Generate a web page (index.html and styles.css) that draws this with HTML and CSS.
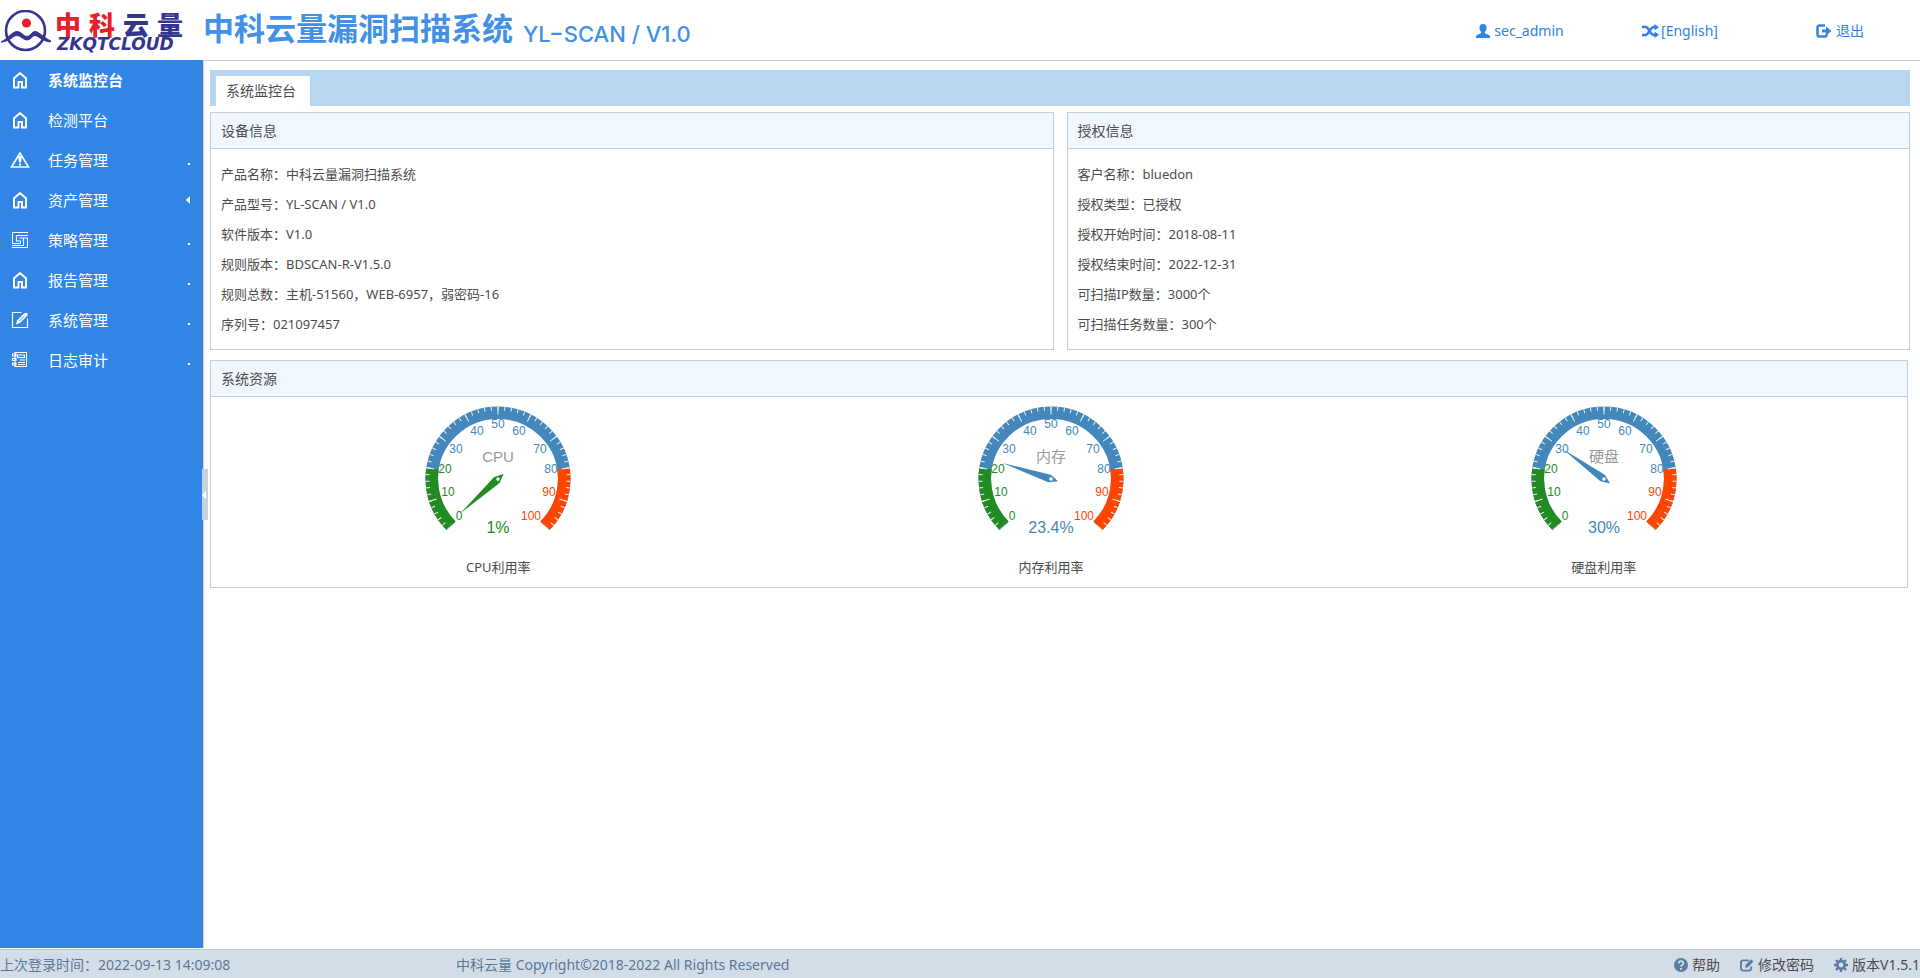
FILE: index.html
```html
<!DOCTYPE html>
<html lang="zh-CN">
<head>
<meta charset="utf-8">
<title>中科云量漏洞扫描系统</title>
<link rel="stylesheet" href="styles.css">
</head>
<body>
<svg class="defs" aria-hidden="true">
  <symbol id="home" viewBox="0 0 18 18"><path d="M3 7.2 9 2l6 5.2V16.500h-4V11H7.500v5.500H3z" fill="none" stroke="currentColor" stroke-width="2"/></symbol>
  <symbol id="warn" viewBox="0 0 20 18"><path d="M10 2 1.500 16h17z" fill="none" stroke="currentColor" stroke-width="1.600"/><path d="M8 5h4l-1 6.500H9zM9 12.500h2v2H9z" fill="currentColor"/></symbol>
  <symbol id="policy" viewBox="0 0 18 18"><path d="M17 1.500H1.500V12.500H9.500V10H5.500V4.500H17M1 16.500H16.500V7H8.500M12.500 7V14.500H1" fill="none" stroke="currentColor" stroke-width="1.100"/></symbol>
  <symbol id="pencil" viewBox="0 0 18 18"><path d="M10.500 1.500h-9v15h15v-9" fill="none" stroke="currentColor" stroke-width="1.200"/><path d="M5 13.500 6 9.500 13.500 2h3v2.500L9 12z" fill="currentColor"/><path d="m8.500 10 5-5" stroke="#3085e5" stroke-width=".8"/></symbol>
  <symbol id="log" viewBox="0 0 18 18"><path d="M4 1.500h11.500v14H4zM6.500 4h7v2.500h-7zM8.500 9H14M7 11.500h7M7 13.500h7M1.500 3H5v2H1.500zM1.500 7.500H5v2H1.500zM1.500 12H5v2H1.500z" fill="none" stroke="currentColor" stroke-width="1.100"/></symbol>
  <symbol id="user" viewBox="0 0 14 14"><path d="M7 0c2.400 0 3.500 1.500 3.500 3.800 0 1.600-.5 3-1.600 4v1.400c1 .8 4.600 1.300 5.100 3.300V14H0v-1.500c.5-2 4.100-2.500 5.100-3.300V7.800c-1.100-1-1.600-2.400-1.600-4C3.500 1.500 4.600 0 7 0z" fill="currentColor"/></symbol>
  <symbol id="shuffle" viewBox="0 0 17 14"><path d="M0 3h3.500C7 3 8 11 12 11h2M0 11h3.500C7 11 8 3 12 3h2" fill="none" stroke="currentColor" stroke-width="2.500"/><path d="M12.500 0 17 3.200 12.500 6.500zM12.500 7.500 17 10.800 12.500 14z" fill="currentColor"/></symbol>
  <symbol id="exit" viewBox="0 0 16 14"><path d="M9 1.500H3.500a2 2 0 0 0-2 2v7a2 2 0 0 0 2 2H9c1 0 1.500-.5 1.500-1.500v-1" fill="none" stroke="currentColor" stroke-width="2.500"/><path d="M6 5.500h4V2.500L15.500 7 10 11.500v-3H6z" fill="currentColor"/></symbol>
  <symbol id="help" viewBox="0 0 14 14"><circle cx="7" cy="7" r="7" fill="currentColor"/><path d="M4.700 5.400C4.800 2.500 9.400 2.500 9.400 5.200 9.400 6.900 7 6.900 7 8.800" fill="none" stroke="#d3dde7" stroke-width="1.800"/><path d="M6 10h2v1.800H6z" fill="#d3dde7"/></symbol>
  <symbol id="edit" viewBox="0 0 15 14"><path d="M9.500 2H3.500A2.500 2.500 0 0 0 1 4.500v6A2.500 2.500 0 0 0 3.500 13h6a2.500 2.500 0 0 0 2.500-2.500V8.500" fill="none" stroke="currentColor" stroke-width="2"/><path d="m5.500 10 .4-3L12 .9 14.400 3.300 8.400 9.500z" fill="currentColor"/></symbol>
  <symbol id="gear" viewBox="0 0 14 14"><circle cx="7" cy="7" r="3.700" fill="none" stroke="currentColor" stroke-width="2.600"/><path d="M7 0v3M7 11v3M0 7h3M11 7h3M2 2l2.200 2.200M9.800 9.800 12 12M12 2 9.800 4.200M4.200 9.800 2 12" stroke="currentColor" stroke-width="2.400"/></symbol>
  <symbol id="dial" viewBox="-100 -82 200 150">
    <g fill="none" stroke-width="12.500">
      <path pathLength="100" stroke="#48b" d="M-46.850 46.850A66.250 66.250 0 1 1 46.850 46.850"/>
      <path pathLength="100" stroke="#228b22" stroke-dasharray="20 100" d="M-46.850 46.850A66.250 66.250 0 1 1 46.850 46.850"/>
      <path pathLength="100" stroke="#ff4500" stroke-dasharray="0 80 20 10" d="M-46.850 46.850A66.250 66.250 0 1 1 46.850 46.850"/>
    </g>
    <path fill="none" stroke="#eee" stroke-width="4" pathLength="500" stroke-dasharray="1.500 8.500" stroke-dashoffset="0.750" d="M-49.850 49.850A70.500 70.500 0 1 1 49.850 49.850"/>
    <path fill="none" stroke="#eee" stroke-width="8" pathLength="500" stroke-dasharray="1.600 48.400" stroke-dashoffset="0.800" d="M-48.440 48.440A68.500 68.500 0 1 1 48.440 48.440"/>
  </symbol>
  <symbol id="needle" viewBox="-60 -60 120 120"><path d="M0-51 4-1.500 0 7.500-4-1.500z" fill="currentColor"/><circle r="1.700" fill="#fff"/></symbol>
</svg>

<header class="top">
  <div class="brand">
    <svg class="emblem" viewBox="0 0 50 42" aria-hidden="true">
      <circle cx="24.500" cy="20.500" r="19.500" fill="none" stroke="#33358f" stroke-width="2.600"/>
      <path d="M0 32C8 28 11 21.500 16 21.500S22 26.500 26 26.500 30 21.500 34 21.500 43 28 50 31L49 32C41 31 37 25.500 34 25.500S30 30 26 30 20 25.500 16 25.500 9 31 1 32z" fill="#33358f" stroke="#33358f"/>
      <circle cx="25.500" cy="13" r="4.600" fill="#e8202a"/>
    </svg>
    <div class="wordmark">
      <div class="wordmark-cn"><span class="red">中</span><span class="red">科</span><span>云</span><span>量</span></div>
      <div class="wordmark-en">ZKQTCLOUD</div>
    </div>
  </div>
  <h1 class="title">中科云量漏洞扫描系统<small>YL−SCAN / V1.0</small></h1>
  <nav class="account">
    <a href="#"><svg class="i14"><use href="#user"/></svg>sec_admin</a>
    <a href="#" class="tight"><svg class="i17"><use href="#shuffle"/></svg>[English]</a>
    <a href="#"><svg class="i16"><use href="#exit"/></svg>退出</a>
  </nav>
</header>

<div class="body">
  <nav class="side">
    <a href="#" class="active"><svg><use href="#home"/></svg><span>系统监控台</span></a>
    <a href="#"><svg><use href="#home"/></svg><span>检测平台</span></a>
    <a href="#"><svg><use href="#warn"/></svg><span>任务管理</span><i class="dot"></i></a>
    <a href="#"><svg><use href="#home"/></svg><span>资产管理</span><i class="arrow"></i></a>
    <a href="#"><svg><use href="#policy"/></svg><span>策略管理</span><i class="dot"></i></a>
    <a href="#"><svg><use href="#home"/></svg><span>报告管理</span><i class="dot"></i></a>
    <a href="#"><svg><use href="#pencil"/></svg><span>系统管理</span><i class="dot"></i></a>
    <a href="#"><svg><use href="#log"/></svg><span>日志审计</span><i class="dot"></i></a>
    <button class="collapse" aria-label="收起菜单"><i class="arrow"></i></button>
  </nav>

  <main class="main">
    <div class="tabs"><button class="tab">系统监控台</button></div>
    <div class="columns">
      <section class="panel">
        <h2>设备信息</h2>
        <ul class="info">
          <li>产品名称：中科云量漏洞扫描系统</li>
          <li>产品型号：YL-SCAN / V1.0</li>
          <li>软件版本：V1.0</li>
          <li>规则版本：BDSCAN-R-V1.5.0</li>
          <li>规则总数：主机-51560，WEB-6957，弱密码-16</li>
          <li>序列号：021097457</li>
        </ul>
      </section>
      <section class="panel">
        <h2>授权信息</h2>
        <ul class="info">
          <li>客户名称：bluedon</li>
          <li>授权类型：已授权</li>
          <li>授权开始时间：2018-08-11</li>
          <li>授权结束时间：2022-12-31</li>
          <li>可扫描IP数量：3000个</li>
          <li>可扫描任务数量：300个</li>
        </ul>
      </section>
    </div>
    <section class="panel resources">
      <h2>系统资源</h2>
      <div class="gauges">
        <figure class="green">
          <svg viewBox="-100 -82 200 150">
            <use href="#dial" x="-100" y="-82" width="200" height="150"/>
            <g class="low"><text x="-39" y="41">0</text><text x="-50" y="17">10</text><text x="-53" y="-6">20</text></g>
            <g class="mid"><text x="-42" y="-26">30</text><text x="-21" y="-44">40</text><text x="0" y="-51">50</text><text x="21" y="-44">60</text><text x="42" y="-26">70</text><text x="53" y="-6">80</text></g>
            <g class="high"><text x="51" y="17">90</text><text x="33" y="41">100</text></g>
            <text class="name" y="-17">CPU</text>
            <g transform="rotate(-132.300)"><use href="#needle" x="-60" y="-60" width="120" height="120"/></g>
            <text class="value" y="54">1%</text>
          </svg>
          <figcaption>CPU利用率</figcaption>
        </figure>
        <figure>
          <svg viewBox="-100 -82 200 150">
            <use href="#dial" x="-100" y="-82" width="200" height="150"/>
            <g class="low"><text x="-39" y="41">0</text><text x="-50" y="17">10</text><text x="-53" y="-6">20</text></g>
            <g class="mid"><text x="-42" y="-26">30</text><text x="-21" y="-44">40</text><text x="0" y="-51">50</text><text x="21" y="-44">60</text><text x="42" y="-26">70</text><text x="53" y="-6">80</text></g>
            <g class="high"><text x="51" y="17">90</text><text x="33" y="41">100</text></g>
            <text class="name" y="-17">内存</text>
            <g transform="rotate(-71.800)"><use href="#needle" x="-60" y="-60" width="120" height="120"/></g>
            <text class="value" y="54">23.4%</text>
          </svg>
          <figcaption>内存利用率</figcaption>
        </figure>
        <figure>
          <svg viewBox="-100 -82 200 150">
            <use href="#dial" x="-100" y="-82" width="200" height="150"/>
            <g class="low"><text x="-39" y="41">0</text><text x="-50" y="17">10</text><text x="-53" y="-6">20</text></g>
            <g class="mid"><text x="-42" y="-26">30</text><text x="-21" y="-44">40</text><text x="0" y="-51">50</text><text x="21" y="-44">60</text><text x="42" y="-26">70</text><text x="53" y="-6">80</text></g>
            <g class="high"><text x="51" y="17">90</text><text x="33" y="41">100</text></g>
            <text class="name" y="-17">硬盘</text>
            <g transform="rotate(-54)"><use href="#needle" x="-60" y="-60" width="120" height="120"/></g>
            <text class="value" y="54">30%</text>
          </svg>
          <figcaption>硬盘利用率</figcaption>
        </figure>
      </div>
    </section>
  </main>
</div>

<footer class="foot">
  <span class="login">上次登录时间：2022-09-13 14:09:08</span>
  <span class="copy">中科云量 Copyright©2018-2022 All Rights Reserved</span>
  <nav class="tools">
    <a href="#"><svg class="i14"><use href="#help"/></svg>帮助</a>
    <a href="#"><svg class="i14"><use href="#edit"/></svg>修改密码</a>
    <a href="#"><svg class="i14"><use href="#gear"/></svg>版本V1.5.1</a>
  </nav>
</footer>
</body>
</html>
```
FILE: styles.css
```css
* { box-sizing: border-box; }
body {
  margin: 0;
  min-height: 100vh;
  display: flex;
  flex-direction: column;
  background: #fff;
  color: #4c4c4c;
  font: 14px/20px "Noto Sans", "Noto Sans CJK SC", sans-serif;
}
a { color: inherit; text-decoration: none; }
h1, h2, ul, figure { margin: 0; padding: 0; font-weight: normal; }
button { border: 0; padding: 0; font: inherit; color: inherit; }
.defs { position: absolute; width: 0; height: 0; }

.top { display: flex; height: 60px; }
.brand { display: flex; flex: none; width: 203px; padding: 10px 0 0 1px; gap: 4px; }
.emblem { width: 50px; height: 42px; }
.wordmark { color: #33358f; font-weight: bold; }
.wordmark-cn { display: flex; gap: 8px; font: 900 26px/27px "Noto Sans CJK SC", sans-serif; }
.wordmark-en { padding-left: 2px; font: italic bold 17px/14px "DejaVu Sans", sans-serif; }
.red { color: #e8202a; }
.title {
  flex: 1;
  color: #4391e6;
  font: bold 31px/54px "Noto Sans CJK SC", sans-serif;
  white-space: nowrap;
}
.title small { margin-left: 10px; font: 500 22px/30px Inter, sans-serif; vertical-align: -2px; }
.account { display: grid; grid-template-columns: repeat(3, 160px); color: #2e83e6; }
.account a { display: flex; align-items: center; justify-content: center; gap: 4px; padding-top: 2px; }
.account .tight { gap: 2px; }
.i14 { width: 14px; height: 14px; }
.i16 { width: 16px; height: 14px; }
.i17 { width: 17px; height: 14px; }

.body { flex: 1; display: flex; }
.side { position: relative; flex: none; width: 203px; background: #3085e5; color: #fff; }
.side a { display: flex; align-items: center; height: 40px; padding: 0 13px 0 10px; font-size: 15px; }
.side svg { width: 20px; height: 18px; margin-right: 18px; }
.side span { flex: 1; }
.side .active { font-weight: bold; }
.dot { width: 2px; height: 2px; margin-top: 8px; background: #fff; }
.arrow { border: 4px solid transparent; border-right-color: #fff; border-left: 0; }
.collapse {
  position: absolute;
  right: -5px;
  top: calc(50% - 35px);
  width: 6px;
  height: 51px;
  display: flex;
  align-items: center;
  background: #c8d1e0;
}

.main { flex: 1; min-width: 0; padding: 9px 10px 0 6px; border-top: 1px solid #c8c8c8; border-left: 1px solid #cfd6e2; }
.tabs { display: flex; align-items: flex-end; height: 36px; padding-left: 6px; background: #b5d7f2; }
.tab { height: 30px; padding: 0 14px 0 10px; background: #fff; }
.columns { display: grid; grid-template-columns: 1fr 1fr; gap: 13px; margin: 6px 0 10px; }
.panel { border: 1px solid #c3cedd; }
.panel h2 { padding: 0 10px; font-size: 14px; line-height: 35px; background: #f0f7ff; border-bottom: 1px solid #c3cedd; }
.info { padding: 10px; list-style: none; font-size: 13px; line-height: 30px; }
.resources { margin-right: 2px; }
.gauges { display: flex; padding: 0 27px 0 11px; }
.gauges figure { flex: 1; display: flex; flex-direction: column; align-items: center; color: #48b; }
.gauges .green { color: #228b22; }
.gauges svg { width: 200px; height: 150px; }
.gauges text { font-family: "Liberation Sans", "Noto Sans CJK SC", sans-serif; font-size: 12px; text-anchor: middle; }
.low { fill: #228b22; }
.mid { fill: #48b; }
.high { fill: #ff4500; }
.gauges .name { font-size: 15px; fill: #999; }
.gauges .value { font-size: 16px; fill: currentColor; }
.gauges figcaption { font-size: 13px; line-height: 40px; color: #4c4c4c; }

.foot {
  display: flex;
  align-items: center;
  height: 29px;
  margin-top: 1px;
  padding-top: 2px;
  border-top: 1px solid #b9c9db;
  background: #d3dde7;
  color: #5c7796;
}
.login { width: 456px; }
.copy { flex: 1; }
.tools { display: flex; gap: 20px; color: #4c4c4c; }
.tools a { display: flex; align-items: center; gap: 4px; }
.tools svg { color: #5c7b9f; }
```
